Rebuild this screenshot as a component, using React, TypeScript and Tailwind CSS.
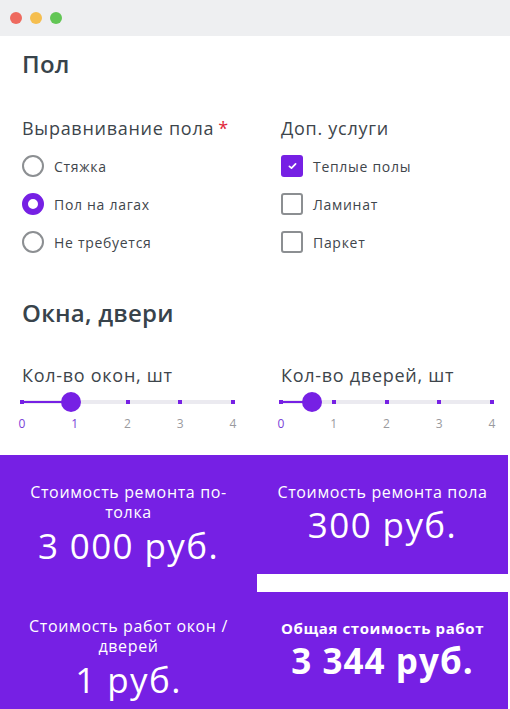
const radios = [
  { label: "Стяжка", checked: false },
  { label: "Пол на лагах", checked: true },
  { label: "Не требуется", checked: false },
];

const extras = [
  { label: "Теплые полы", checked: true },
  { label: "Ламинат", checked: false },
  { label: "Паркет", checked: false },
];

function Radio({ checked }: { checked: boolean }) {
  return checked ? (
    <span className="h-[22px] w-[22px] shrink-0 rounded-full border-[6px] border-[#7620e4] bg-white" />
  ) : (
    <span className="h-[22px] w-[22px] shrink-0 rounded-full border-2 border-[#8c8f92] bg-white" />
  );
}

function Check({ checked }: { checked: boolean }) {
  return checked ? (
    <span className="flex h-[22px] w-[22px] shrink-0 items-center justify-center rounded-[3px] bg-[#7620e4]">
      <svg width="9" height="8" viewBox="0 0 9 8" fill="none">
        <path d="M1.4 4.3 3.5 6.2 7.6 1.8" stroke="white" strokeWidth="1.7" strokeLinecap="round" strokeLinejoin="round" />
      </svg>
    </span>
  ) : (
    <span className="h-[22px] w-[22px] shrink-0 rounded-[3px] border-2 border-[#8c8f92] bg-white" />
  );
}

// value: position of thumb in steps (0..4)
function Slider({ label, value, active }: { label: string; value: number; active: number }) {
  const ticks = [0, 1, 2, 3, 4];
  const pct = (value / 4) * 100;
  return (
    <div>
      <p className="text-[18px] leading-[24px] tracking-[0.04em] text-[#3d454b]">{label}</p>
      <div className="relative mt-[5px] h-5 w-[211px]">
        <div className="absolute left-0 right-0 top-[8px] h-1 bg-[#ebeaf0]" />
        <div className="absolute left-0 top-[9px] h-[2px] bg-[#7620e4]" style={{ width: `${pct}%` }} />
        {ticks.map((t) => (
          <span
            key={t}
            className="absolute top-[8px] h-1 w-1 -translate-x-1/2 bg-[#7620e4]"
            style={{ left: `${(t / 4) * 100}%` }}
          />
        ))}
        <span
          className="absolute top-0 h-5 w-5 -translate-x-1/2 rounded-full bg-[#7620e4]"
          style={{ left: `${pct}%` }}
        />
      </div>
      <div className="relative mt-1 h-4 w-[211px] text-[12px] leading-4">
        {ticks.map((t) => (
          <span
            key={t}
            className={`absolute -translate-x-1/2 ${t <= active ? "text-[#7a3fd8]" : "text-[#9a9a9e]"}`}
            style={{ left: `${(t / 4) * 100}%` }}
          >
            {t}
          </span>
        ))}
      </div>
    </div>
  );
}

export default function App() {
  return (
    <div className="h-[709px] w-[510px] overflow-hidden bg-white font-['Open_Sans',sans-serif]">
      {/* window bar */}
      <div className="flex h-9 items-center gap-2 bg-[#eeeff1] pl-[10px]">
        <span className="h-3 w-3 rounded-full bg-[#ee6a5f]" />
        <span className="h-3 w-3 rounded-full bg-[#f5be4f]" />
        <span className="h-3 w-3 rounded-full bg-[#62c655]" />
      </div>

      <div className="px-[22px]">
        <h2 className="mt-[14px] text-[24px] font-semibold leading-[28px] tracking-[0.01em] text-[#38434b]">Пол</h2>

        <div className="mt-[38px] grid grid-cols-[259px_1fr]">
          <div>
            <p className="text-[18px] leading-[24px] tracking-[0.04em] text-[#3d454b]">
              Выравнивание пола<span className="ml-1 text-[#e0263a]">*</span>
            </p>
            <div className="mt-[7px]">
              {radios.map((r) => (
                <div key={r.label} className="flex h-[38px] items-center gap-[10px] text-[14px] tracking-[0.05em] text-[#3f464c]">
                  <Radio checked={r.checked} />
                  {r.label}
                </div>
              ))}
            </div>
          </div>
          <div>
            <p className="text-[18px] leading-[24px] tracking-[0.04em] text-[#3d454b]">Доп. услуги</p>
            <div className="mt-[7px]">
              {extras.map((r) => (
                <div key={r.label} className="flex h-[38px] items-center gap-[10px] text-[14px] tracking-[0.05em] text-[#3f464c]">
                  <Check checked={r.checked} />
                  {r.label}
                </div>
              ))}
            </div>
          </div>
        </div>

        <h2 className="mt-[38px] text-[24px] font-semibold leading-[28px] tracking-[0.01em] text-[#38434b]">Окна, двери</h2>

        <div className="mt-[36px] grid grid-cols-[259px_1fr]">
          <Slider label="Кол-во окон, шт" value={0.92} active={1} />
          <Slider label="Кол-во дверей, шт" value={0.58} active={0} />
        </div>
      </div>

      {/* totals */}
      <div className="mt-[23px] grid w-[508px] grid-cols-[257px_251px] grid-rows-[119px_135px] bg-[#7620e4] text-center text-white">
        <div className="pt-[27px]">
          <p className="text-[16px] leading-[20px] tracking-[0.04em]">
            Стоимость ремонта по-
            <br />
            толка
          </p>
          <p className="mt-[3px] text-[35px] leading-[42px] tracking-[0.04em]">3 000 руб.</p>
        </div>
        <div className="pt-[27px]">
          <p className="text-[16px] leading-[20px] tracking-[0.04em]">Стоимость ремонта пола</p>
          <p className="mt-[2px] text-[35px] leading-[42px] tracking-[0.04em]">300 руб.</p>
        </div>
        <div className="pt-[42px]">
          <p className="text-[16px] leading-[20px] tracking-[0.04em]">
            Стоимость работ окон /
            <br />
            дверей
          </p>
          <p className="mt-[2px] text-[35px] leading-[44px] tracking-[0.04em]">1 руб.</p>
        </div>
        <div className="border-t-[18px] border-white pt-[26px]">
          <p className="text-[15px] font-bold leading-[20px] tracking-[0.04em]">Общая стоимость работ</p>
          <p className="mt-[2px] text-[35px] font-bold leading-[42px] tracking-[0.03em]">3 344 руб.</p>
        </div>
      </div>
    </div>
  );
}
